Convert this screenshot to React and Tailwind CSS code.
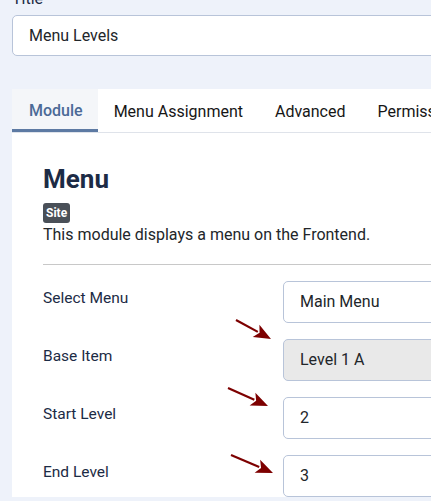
import React from 'react';

const fields = [
  { label: 'Select Menu', value: 'Main Menu' },
  { label: 'Base Item', value: 'Level 1 A', disabled: true },
  { label: 'Start Level', value: '2' },
  { label: 'End Level', value: '3' },
];

const tabs = ['Module', 'Menu Assignment', 'Advanced', 'Permissions'];

// tail -> tip, in page coords
const arrows = [
  [236, 320, 271, 339],
  [228, 388, 268, 406],
  [231, 455, 273, 473],
];

export default function App() {
  return (
    <div
      className="relative h-[501px] w-[431px] overflow-hidden bg-[#eef2fa] pl-3 text-[#22262a]"
      style={{ fontFamily: 'Roboto, "Noto Sans", sans-serif' }}
    >
      <div className="flex flex-col">
        <label className="-mt-[13px] mb-1 text-base leading-6 text-[#1c2b45]">Title</label>
        <div className="flex h-[41px] w-[440px] items-center rounded-[5px] border border-[#b8c4d9] bg-white pl-[16px] text-base">
          Menu Levels
        </div>

        <div className="mt-[33px] w-[460px] bg-white">
          <div className="flex border-b border-[#dfe3ea]">
            {tabs.map((t, i) => (
              <div
                key={t}
                className={
                  i === 0
                    ? 'flex h-[43px] items-center whitespace-nowrap border-b-[3px] border-[#5d7aa3] bg-[#f4f6f9] pl-[17px] pr-[15px] pt-[3px] text-base font-medium text-[#4b6a97]'
                    : 'flex h-[43px] items-center whitespace-nowrap px-[16px] pt-[3px] text-base text-[#161616]'
                }
              >
                {t}
              </div>
            ))}
          </div>

          <div className="px-[31px] pt-[30px]">
            <h2 className="text-[26px] font-bold leading-8 text-[#1c2b45]">Menu</h2>
            <div className="mt-[8px] w-fit rounded-[3px] bg-[#4a5058] px-[3px] text-xs font-bold leading-5 text-white">
              Site
            </div>
            <p className="text-base leading-6 text-[#22262a]">This module displays a menu on the Frontend.</p>
            <hr className="mt-[17px] border-t border-[#c8c8c8]" />

            <div className="mt-[16px] flex flex-col gap-[16px]">
              {fields.map((f) => (
                <div key={f.label} className="flex">
                  <div className="w-[240px] pt-[5px] text-[15.5px] leading-6 text-[#1c2b45]">{f.label}</div>
                  <div
                    className={`flex h-[42px] flex-1 items-center rounded-[5px] border border-[#b8c4d9] pl-[16px] text-base ${
                      f.disabled ? 'bg-[#e9e9e9]' : 'bg-white'
                    }`}
                  >
                    {f.value}
                  </div>
                </div>
              ))}
            </div>
          </div>
        </div>
      </div>

      <svg className="pointer-events-none absolute left-0 top-0" width="431" height="501">
        {arrows.map(([x1, y1, x2, y2], i) => {
          const dx = x2 - x1;
          const dy = y2 - y1;
          const len = Math.hypot(dx, dy);
          const ux = dx / len;
          const uy = dy / len;
          const hl = 17;
          const hw = 7;
          const bx = x2 - ux * hl;
          const by = y2 - uy * hl;
          return (
            <g key={i} fill="#7d0000" stroke="#7d0000">
              <line x1={x1} y1={y1} x2={bx + ux * 2} y2={by + uy * 2} strokeWidth="2.2" />
              <polygon
                stroke="none"
                points={`${x2},${y2} ${bx - uy * hw},${by + ux * hw} ${bx + ux * 4},${by + uy * 4} ${bx + uy * hw},${by - ux * hw}`}
              />
            </g>
          );
        })}
      </svg>
    </div>
  );
}
